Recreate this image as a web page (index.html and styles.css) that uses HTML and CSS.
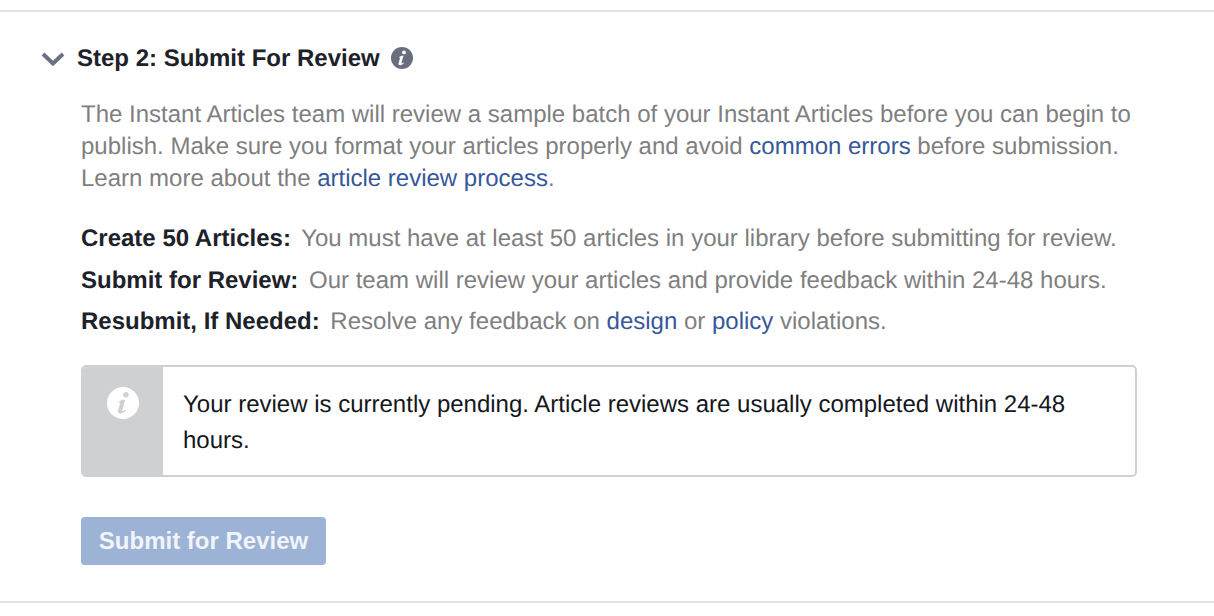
FILE: index.html
```html
<!DOCTYPE html>
<html lang="en">
<head>
<meta charset="utf-8">
<title>Submit For Review</title>
<link rel="stylesheet" href="styles.css">
</head>
<body>
<section class="step">
  <header class="step-head">
    <svg class="chevron" width="24" height="14" viewBox="0 0 24 14"><path d="M2 2l10 9.5L22 2" fill="none" stroke="#6a7180" stroke-width="4"/></svg>
    <h2 class="step-title">Step 2: Submit For Review</h2>
    <svg class="info" width="22" height="22" viewBox="0 0 22 22"><circle cx="11" cy="11" r="11" fill="#686e7d"/><circle cx="13" cy="5.4" r="1.9" fill="#fff"/><path d="M8.2 10c1.3-1 2.7-1.3 4.3-1.2l-2 7c-.2.7.4.9.9.5l1.1-.8.5.6c-1.2 1.4-2.5 2.1-3.9 2.1-1.3 0-1.9-.8-1.5-2l1.6-5.6-1.2.1z" fill="#fff"/></svg>
  </header>
  <div class="step-body">
    <p class="intro">The Instant Articles team will review a sample batch of your Instant Articles before you can begin to publish. Make sure you format your articles properly and avoid <a href="#">common errors</a> before submission. Learn more about the <a href="#">article review process</a>.</p>
    <ul class="facts">
      <li><b>Create 50 Articles:</b> You must have at least 50 articles in your library before submitting for review.</li>
      <li><b>Submit for Review:</b> Our team will review your articles and provide feedback within 24-48 hours.</li>
      <li><b>Resubmit, If Needed:</b> Resolve any feedback on <a href="#">design</a> or <a href="#">policy</a> violations.</li>
    </ul>
    <div class="notice">
      <div class="notice-side">
        <svg width="32" height="32" viewBox="0 0 22 22"><circle cx="11" cy="11" r="11" fill="#fff"/><circle cx="13" cy="5.4" r="1.9" fill="#ced0d4"/><path d="M8.2 10c1.3-1 2.7-1.3 4.3-1.2l-2 7c-.2.7.4.9.9.5l1.1-.8.5.6c-1.2 1.4-2.5 2.1-3.9 2.1-1.3 0-1.9-.8-1.5-2l1.6-5.6-1.2.1z" fill="#ced0d4"/></svg>
      </div>
      <p class="notice-text">Your review is currently pending. Article reviews are usually completed within 24-48 hours.</p>
    </div>
    <button class="submit" type="button">Submit for Review</button>
  </div>
</section>
</body>
</html>
```
FILE: styles.css
```css
html, body {
  margin: 0;
  background: #fff;
}
body {
  padding-top: 10px;
  font-family: "Liberation Sans", Arial, sans-serif;
  font-size: 24px;
  color: #7f7f7f;
  text-rendering: geometricPrecision;
}
.step {
  height: 593px;
  box-sizing: border-box;
  border-top: 2px solid #e2e3e6;
  border-bottom: 2px solid #e2e3e6;
}
.step-head {
  display: flex;
  align-items: center;
  height: 30px;
  margin-top: 32px;
  padding-left: 41px;
}
.chevron {
  margin-right: 12px;
}
.info {
  margin-bottom: 2px;
}
.step-title {
  margin: 0 11px 0 0;
  font-size: 24px;
  line-height: 30px;
  font-weight: bold;
  color: #1d2129;
}
.step-body {
  padding: 25px 0 0 81px;
  width: 1056px;
}
.intro {
  margin: 0;
  line-height: 32px;
}
a {
  color: #365899;
  text-decoration: none;
}
.facts {
  list-style: none;
  margin: 28px 0 0;
  padding: 0;
}
.facts li {
  line-height: 32px;
  margin-bottom: 9.5px;
}
.facts b {
  color: #1d2129;
  margin-right: 4px;
}
.notice {
  display: flex;
  box-sizing: border-box;
  height: 112px;
  margin-top: 27px;
  border: 2px solid #ced0d4;
  border-radius: 5px;
  overflow: hidden;
}
.notice-side {
  flex: 0 0 80px;
  background: #ced0d4;
  display: flex;
  justify-content: center;
  align-items: flex-start;
  padding-top: 20px;
  box-sizing: border-box;
}
.notice-text {
  margin: 0;
  padding: 20px 40px 0 20px;
  line-height: 36px;
  color: #14171c;
}
.submit {
  display: block;
  width: 245px;
  height: 48px;
  margin-top: 40px;
  padding: 0;
  border: 0;
  border-radius: 4px;
  background: #9db3d6;
  color: #f1f4f9;
  font: bold 24px "Liberation Sans", Arial, sans-serif;
}
```
